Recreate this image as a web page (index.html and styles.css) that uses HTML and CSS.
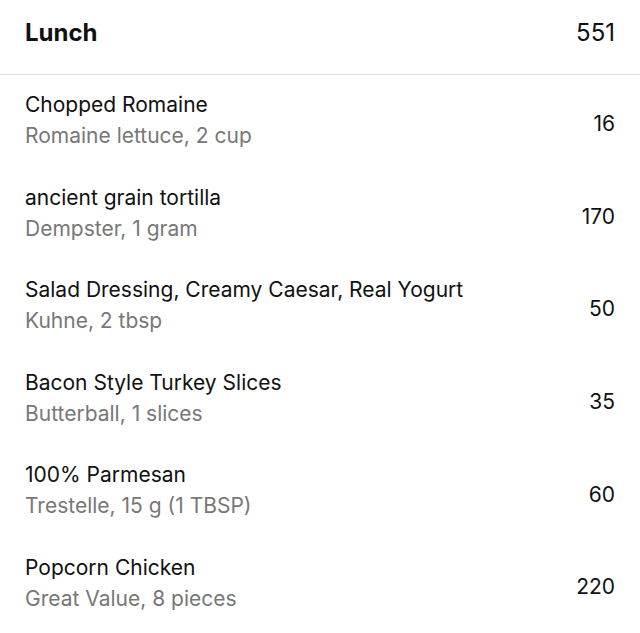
FILE: index.html
```html
<!DOCTYPE html>
<html>
<head>
<meta charset="utf-8">
<link rel="stylesheet" href="styles.css">
</head>
<body>
<div class="meal">
  <div class="meal-header">
    <span class="meal-title">Lunch</span>
    <span class="meal-total">551</span>
  </div>
  <div class="item">
    <div class="item-text"><div class="item-name">Chopped Romaine</div><div class="item-desc">Romaine lettuce, 2 cup</div></div>
    <div class="item-cal">16</div>
  </div>
  <div class="item">
    <div class="item-text"><div class="item-name">ancient grain tortilla</div><div class="item-desc">Dempster, 1 gram</div></div>
    <div class="item-cal">170</div>
  </div>
  <div class="item">
    <div class="item-text"><div class="item-name">Salad Dressing, Creamy Caesar, Real Yogurt</div><div class="item-desc">Kuhne, 2 tbsp</div></div>
    <div class="item-cal">50</div>
  </div>
  <div class="item">
    <div class="item-text"><div class="item-name">Bacon Style Turkey Slices</div><div class="item-desc">Butterball, 1 slices</div></div>
    <div class="item-cal">35</div>
  </div>
  <div class="item">
    <div class="item-text"><div class="item-name">100% Parmesan</div><div class="item-desc">Trestelle, 15 g (1 TBSP)</div></div>
    <div class="item-cal">60</div>
  </div>
  <div class="item">
    <div class="item-text"><div class="item-name">Popcorn Chicken</div><div class="item-desc">Great Value, 8 pieces</div></div>
    <div class="item-cal">220</div>
  </div>
</div>
</body>
</html>
```
FILE: styles.css
```css
html, body {
  margin: 0;
  padding: 0;
  background: #ffffff;
}
body {
  font-family: Inter, "Liberation Sans", sans-serif;
  color: #111111;
}
.meal-header {
  display: flex;
  justify-content: space-between;
  align-items: center;
  height: 75px;
  box-sizing: border-box;
  padding: 16px 25px 25px 25px;
  border-bottom: 1px solid #dedede;
  line-height: 34px;
}
.meal-title {
  font-size: 24px;
  font-weight: 700;
}
.meal-total {
  font-size: 24px;
  font-weight: 400;
}
.item {
  display: flex;
  justify-content: space-between;
  align-items: center;
  height: 92.6px;
  box-sizing: border-box;
  padding: 0 25px;
}
.item-text {
  display: flex;
  flex-direction: column;
  padding-top: 14px;
  padding-bottom: 16.6px;
  align-self: stretch;
  justify-content: center;
  box-sizing: border-box;
}
.item-name {
  font-size: 21px;
  line-height: 31px;
}
.item-desc {
  font-size: 21px;
  line-height: 31px;
  color: #777777;
}
.item-cal {
  font-size: 21px;
  line-height: 31px;
  margin-top: 5px;
}
```
